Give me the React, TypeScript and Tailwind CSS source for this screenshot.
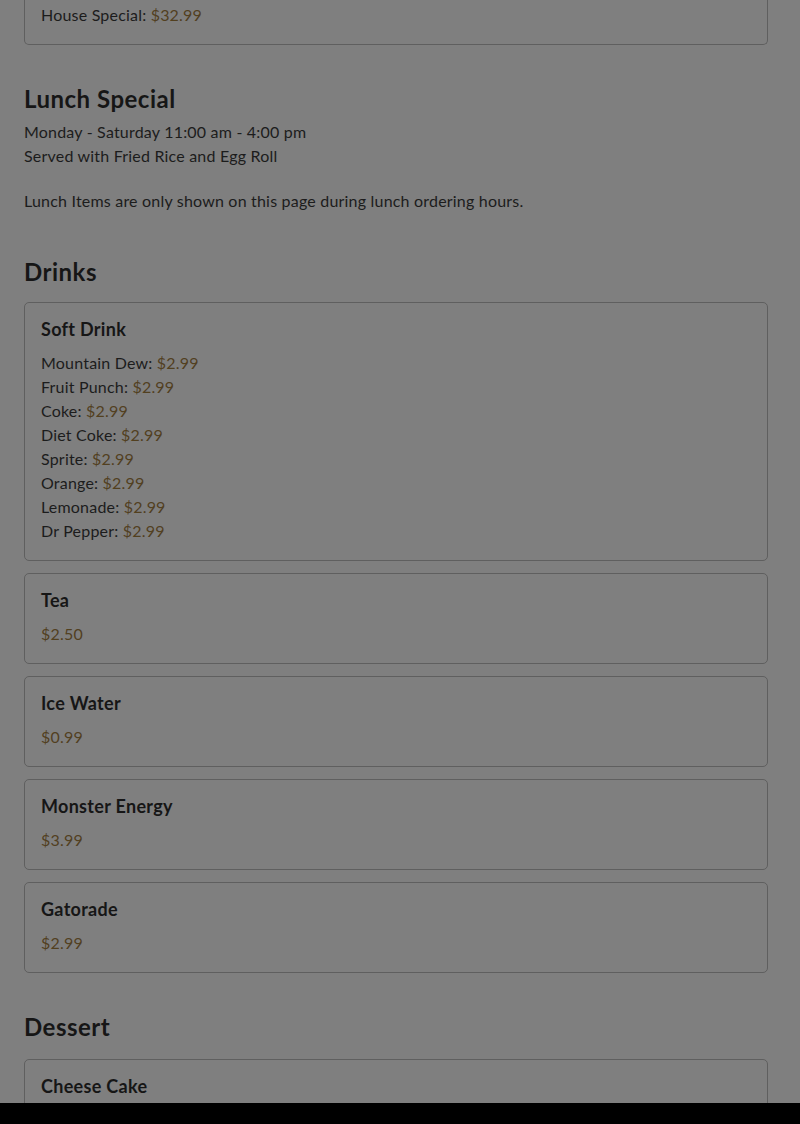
type Item = { name: string; price: string };

const softDrinks: Item[] = [
  { name: 'Mountain Dew', price: '$2.99' },
  { name: 'Fruit Punch', price: '$2.99' },
  { name: 'Coke', price: '$2.99' },
  { name: 'Diet Coke', price: '$2.99' },
  { name: 'Sprite', price: '$2.99' },
  { name: 'Orange', price: '$2.99' },
  { name: 'Lemonade', price: '$2.99' },
  { name: 'Dr Pepper', price: '$2.99' },
];

const drinks = [
  { title: 'Tea', price: '$2.50' },
  { title: 'Ice Water', price: '$0.99' },
  { title: 'Monster Energy', price: '$3.99' },
  { title: 'Gatorade', price: '$2.99' },
];

function Price({ children }: { children: string }) {
  return <span className="text-[#52401f]">{children}</span>;
}

function Card({ title, children }: { title: string; children?: React.ReactNode }) {
  return (
    <div className="rounded-[5px] border border-[#5f5f5f] px-4 pt-4 pb-[17px]">
      <h3 className="text-[18px] leading-[20px] font-bold tracking-[0.3px] text-[#161616]">{title}</h3>
      {children ? <div className="mt-3">{children}</div> : null}
    </div>
  );
}

export default function App() {
  return (
    <div
      className="flex h-[1124px] flex-col overflow-hidden bg-[#7f7f7f] text-[16px] leading-6 tracking-[0.2px] text-[#1c1c1c]"
      style={{ fontFamily: 'Lato, "Noto Sans", sans-serif' }}
    >
      <main className="flex-1 overflow-hidden pr-8 pl-6">
        <div className="rounded-b-[5px] border border-t-0 border-[#5f5f5f] px-4 pt-[3px] pb-[17px]">
          <p>
            House Special: <Price>$32.99</Price>
          </p>
        </div>

        <section className="mt-[38px]">
          <h2 className="mb-[5px] text-[24px] leading-8 font-bold tracking-[0.5px] text-[#161616]">Lunch Special</h2>
          <p>Monday - Saturday 11:00 am - 4:00 pm</p>
          <p>Served with Fried Rice and Egg Roll</p>
          <p className="mt-[21px]">Lunch Items are only shown on this page during lunch ordering hours.</p>
        </section>

        <section className="mt-[43px]">
          <h2 className="mb-[14px] text-[24px] leading-8 font-bold tracking-[0.5px] text-[#161616]">Drinks</h2>
          <div className="flex flex-col gap-3">
            <Card title="Soft Drink">
              <ul>
                {softDrinks.map((d) => (
                  <li key={d.name}>
                    {d.name}: <Price>{d.price}</Price>
                  </li>
                ))}
              </ul>
            </Card>
            {drinks.map((d) => (
              <Card key={d.title} title={d.title}>
                <p>
                  <Price>{d.price}</Price>
                </p>
              </Card>
            ))}
          </div>
        </section>

        <section className="mt-[38px]">
          <h2 className="mb-4 text-[24px] leading-8 font-bold tracking-[0.5px] text-[#161616]">Dessert</h2>
          <Card title="Cheese Cake" />
        </section>
      </main>
      <div className="h-[21px] shrink-0 bg-black" />
    </div>
  );
}
